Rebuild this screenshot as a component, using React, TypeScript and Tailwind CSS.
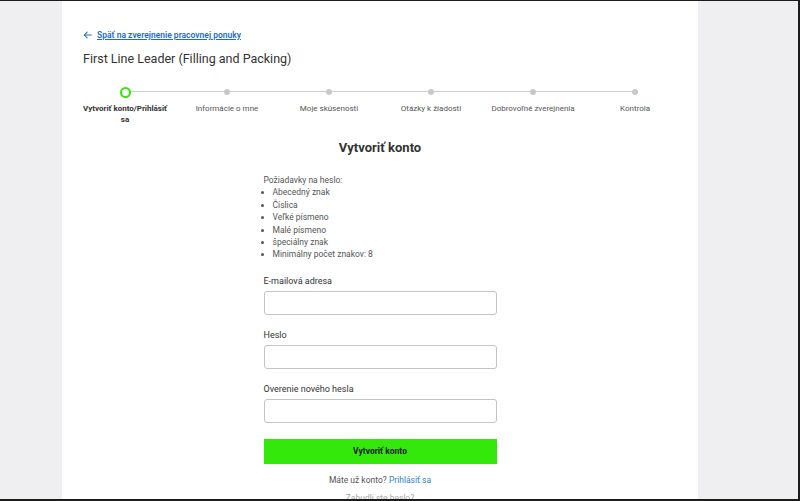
import React from "react";

const steps = [
  "Vytvoriť konto/Prihlásiť sa",
  "Informácie o mne",
  "Moje skúsenosti",
  "Otázky k žiadosti",
  "Dobrovoľné zverejnenia",
  "Kontrola",
];

const reqs = [
  "Abecedný znak",
  "Číslica",
  "Veľké písmeno",
  "Malé písmeno",
  "špeciálny znak",
  "Minimálny počet znakov: 8",
];

function Field({ label }: { label: string }) {
  return (
    <div className="flex flex-col">
      <label className="text-[9px] font-normal text-[#333] leading-[12px] mb-[4px]">{label}</label>
      <div className="h-[24px] rounded-[3px] border border-[#c4c4c4] bg-white" />
    </div>
  );
}

export default function App() {
  return (
    <div
      className="w-[800px] h-[501px] overflow-hidden bg-[#efeff1] border-t border-r-[2px] border-b-[2px] border-[#1c1c1c] flex"
      style={{ fontFamily: "Roboto, 'Noto Sans', sans-serif" }}
    >
      <div className="ml-[62px] w-[636px] bg-white flex flex-col pl-[21px] pr-[21px] pt-[28px]">
        <a className="flex items-center gap-[4px] text-[#1b6dc8]">
          <svg width="10" height="10" viewBox="0 0 24 24" fill="none" stroke="#1b6dc8" strokeWidth="2.5" strokeLinecap="round" strokeLinejoin="round">
            <path d="M20 12H4" />
            <path d="M10 5l-7 7 7 7" />
          </svg>
          <span className="text-[8.5px] font-semibold underline leading-[12px]">Späť na zverejnenie pracovnej ponuky</span>
        </a>
        <h1 className="mt-[9px] text-[12.5px] text-[#333] leading-[18px]">First Line Leader (Filling and Packing)</h1>

        <div className="relative mt-[19px] ml-[-9px] w-[612px]">
          <div className="absolute left-[51px] right-[51px] top-[4px] h-[1px] bg-[#cfcfcf]" />
          <div className="relative flex">
            {steps.map((s, i) => (
              <div key={s} className="w-[102px] flex flex-col items-center">
                <div className="h-[10px] flex items-center justify-center">
                  {i === 0 ? (
                    <div className="w-[11px] h-[11px] rounded-full border-[2.5px] border-[#39e214] bg-white" />
                  ) : (
                    <div className="w-[6px] h-[6px] rounded-full bg-[#c8c8c8]" />
                  )}
                </div>
                <div
                  className={
                    "mt-[6px] text-center text-[8px] leading-[11px] px-[6px] " +
                    (i === 0 ? "font-bold text-[#333]" : "text-[#555]")
                  }
                >
                  {s}
                </div>
              </div>
            ))}
          </div>
        </div>

        <div className="mx-auto w-[233px] flex flex-col mt-[14px]">
          <h2 className="text-center text-[13px] font-bold text-[#333] leading-[18px]">Vytvoriť konto</h2>
          <div className="mt-[17px] text-[8.5px] text-[#555] leading-[12.4px]">
            <div>Požiadavky na heslo:</div>
            <ul className="list-disc pl-[9px]">
              {reqs.map((r) => (
                <li key={r}>{r}</li>
              ))}
            </ul>
          </div>
          <div className="mt-[14px] flex flex-col gap-[14px]">
            <Field label="E-mailová adresa" />
            <Field label="Heslo" />
            <Field label="Overenie nového hesla" />
          </div>
          <button className="mt-[16px] h-[25px] bg-[#33e80a] text-[8.5px] font-bold text-[#1a1a1a]">Vytvoriť konto</button>
          <div className="mt-[10px] text-center text-[8.5px] text-[#555] leading-[12px]">
            Máte už konto? <span className="text-[#2f7fd3]">Prihlásiť sa</span>
          </div>
          <div className="mt-[6px] text-center text-[8.5px] text-[#aaa] leading-[12px]">Zabudli ste heslo?</div>
        </div>
      </div>
    </div>
  );
}
